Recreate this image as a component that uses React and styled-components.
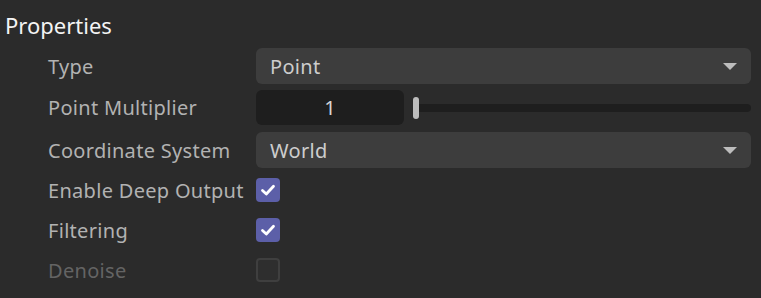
import React from 'react'
import styled, { createGlobalStyle } from 'styled-components'

const Global = createGlobalStyle`
  html, body {
    margin: 0;
    background: #2b2b2b;
  }
  body {
    font-family: "Noto Sans", "Open Sans", sans-serif;
  }
`

const Panel = styled.div`
  width: 761px;
  height: 298px;
  background: #2b2b2b;
  box-sizing: border-box;
  padding: 0 10px 0 0;
  overflow: hidden;
`

const Title = styled.div`
  height: 48px;
  line-height: 50px;
  padding-left: 5px;
  color: #f4f4f4;
  font-size: 22px;
  box-sizing: border-box;
`

const Rows = styled.div`
  display: flex;
  flex-direction: column;
  padding-left: 48px;
`

const Row = styled.div`
  display: grid;
  grid-template-columns: 208px 1fr;
  align-items: center;
  height: ${p => p.h}px;
  margin-bottom: ${p => p.gap || 0}px;
`

const Label = styled.div`
  font-size: 20px;
  letter-spacing: 0.3px;
  color: ${p => (p.disabled ? '#646464' : '#b2b2b2')};
  white-space: nowrap;
`

const Select = styled.div`
  height: 36px;
  border-radius: 6px;
  background: #3d3d3d;
  display: flex;
  align-items: center;
  justify-content: space-between;
  padding: 0 14px 0 14px;
  color: #cdcdcd;
  font-size: 20px;
  letter-spacing: 0.3px;
`

const Caret = styled.div`
  width: 0;
  height: 0;
  border-left: 7px solid transparent;
  border-right: 7px solid transparent;
  border-top: 7px solid #bdbdbd;
`

const SliderRow = styled.div`
  display: flex;
  align-items: center;
  height: 35px;
`

const NumberField = styled.div`
  width: 148px;
  height: 35px;
  border-radius: 6px;
  background: #1e1e1e;
  color: #d6d6d6;
  font-size: 20px;
  display: flex;
  align-items: center;
  justify-content: center;
  flex-shrink: 0;
`

const Track = styled.div`
  position: relative;
  flex: 1;
  height: 8px;
  margin-left: 10px;
  background: #1e1e1e;
  border-radius: 0 4px 4px 0;
`

const Thumb = styled.div`
  position: absolute;
  left: -1px;
  top: -7px;
  width: 6px;
  height: 22px;
  border-radius: 3px;
  background: #bdbdbd;
`

const Check = styled.div`
  width: 24px;
  height: 24px;
  box-sizing: border-box;
  border-radius: 4px;
  background: ${p => (p.checked ? '#5c5fa8' : '#2e2e2e')};
  border: ${p => (p.checked ? 'none' : '2px solid #3f3f3f')};
  display: flex;
  align-items: center;
  justify-content: center;
`

const Tick = () => (
  <svg width="18" height="18" viewBox="0 0 18 18">
    <path d="M3.5 9.5 L7.3 13 L14.5 5.2" fill="none" stroke="#ffffff" strokeWidth="2.8" strokeLinecap="round" strokeLinejoin="round" />
  </svg>
)

export default function App() {
  return (
    <Panel>
      <Global />
      <Title>Properties</Title>
      <Rows>
        <Row h={36} gap={6}>
          <Label>Type</Label>
          <Select>Point<Caret /></Select>
        </Row>
        <Row h={35} gap={7}>
          <Label>Point Multiplier</Label>
          <SliderRow>
            <NumberField>1</NumberField>
            <Track><Thumb /></Track>
          </SliderRow>
        </Row>
        <Row h={36} gap={2}>
          <Label>Coordinate System</Label>
          <Select>World<Caret /></Select>
        </Row>
        <Row h={40}>
          <Label>Enable Deep Output</Label>
          <Check checked><Tick /></Check>
        </Row>
        <Row h={40}>
          <Label>Filtering</Label>
          <Check checked><Tick /></Check>
        </Row>
        <Row h={40}>
          <Label disabled>Denoise</Label>
          <Check />
        </Row>
      </Rows>
    </Panel>
  )
}
